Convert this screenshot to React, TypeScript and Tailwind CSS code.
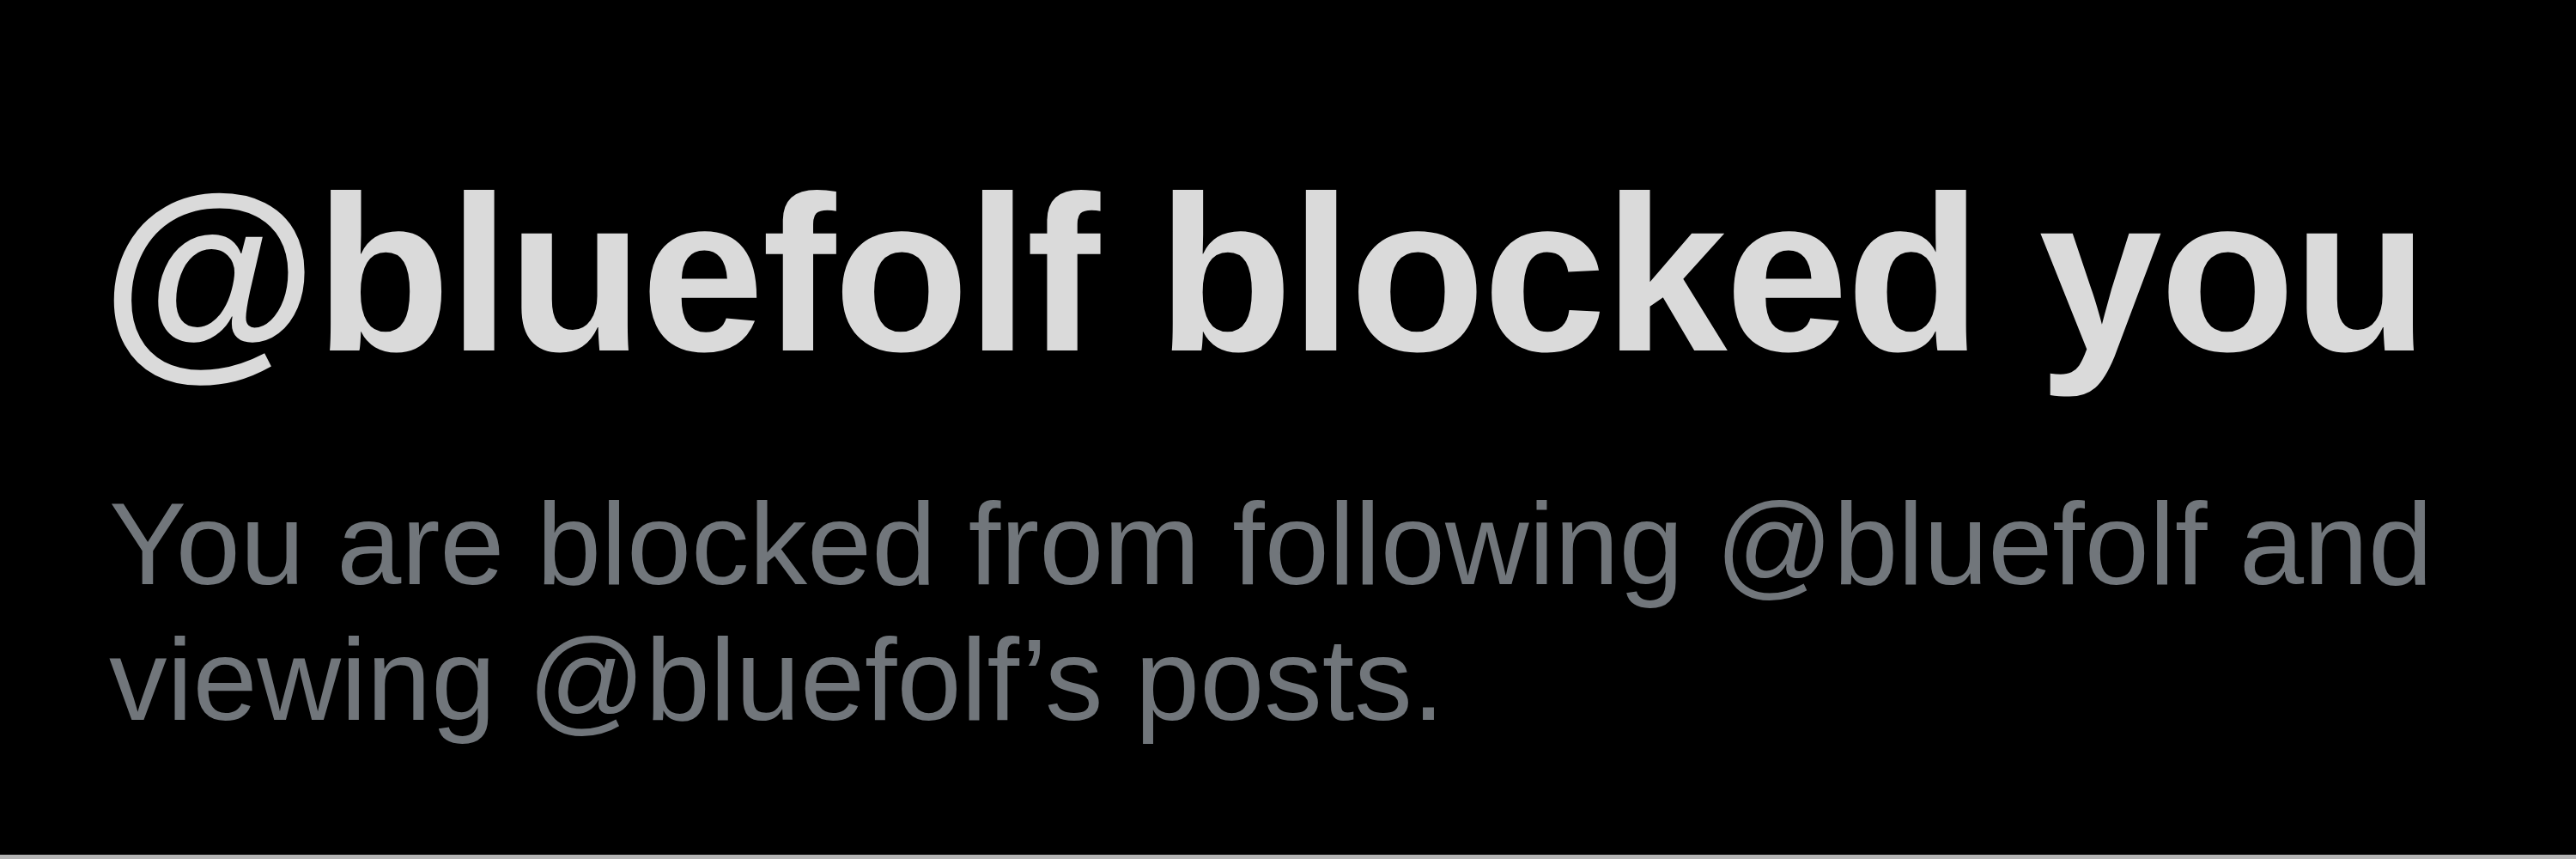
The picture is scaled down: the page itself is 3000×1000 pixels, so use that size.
export default function App() {
  return (
    <div className="w-[3000px] h-[1000px] bg-black flex flex-col font-['Liberation_Sans',Arial,sans-serif]">
      <div className="flex-1 pl-[130px] pt-[190px]">
        {/* Block notice title */}
        <h1 className="-ml-[12px] text-[258px] leading-none font-bold tracking-[-2.5px] text-[#dadada] whitespace-nowrap">
          @bluefolf blocked you
        </h1>
        <p className="mt-[107px] -ml-[3px] w-[2790px] text-[135px] leading-[158px] text-[#71767b]">
          You are blocked from following @bluefolf and viewing @bluefolf’s posts.
        </p>
      </div>
      <div className="h-[5px] bg-[#b4b4b4]" />
    </div>
  );
}
